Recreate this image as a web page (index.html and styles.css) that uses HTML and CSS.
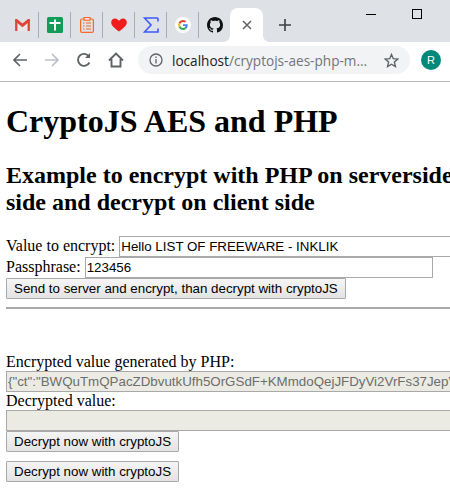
FILE: index.html
```html
<!DOCTYPE html>
<html lang="en">
<head>
  <meta charset="UTF-8" />
  <title>CryptoJS AES and PHP</title>
  <link rel="stylesheet" href="styles.css">
</head>
<body>
  <div class="tabstrip">
    <div class="tab-icon">
      <svg width="15" height="12" viewBox="0 0 16 13"><path d="M0 1.500 8 8l8-6.500V13H0z" fill="#e8e8e8"/><path d="M0 1h2.500v12H0z" fill="#d8473a"/><path d="M13.500 1H16v12h-2.500z" fill="#d8473a"/><path d="M0 0h2l6 5 6-5h2v2.500L8 9 0 2.500z" fill="#d8473a"/></svg>
    </div>
    <div class="tab-icon">
      <svg width="16" height="16" viewBox="0 0 16 16"><rect width="16" height="16" rx="1.500" fill="#0f9d58"/><path d="M7 2.500h2V5h4.500v2H9v6.500H7V7H2.500V5H7z" fill="#fff"/></svg>
    </div>
    <div class="tab-icon">
      <svg width="14" height="16" viewBox="0 0 14 16" fill="none" stroke="#f4682a" stroke-width="1.200"><rect x=".6" y="2" width="12.800" height="13.400" rx="1.500"/><rect x="4" y=".6" width="6" height="2.600" fill="#fff"/><path d="M3 6h1.500M6 6h5M3 9h1.500M6 9h5M3 12h1.500M6 12h5"/></svg>
    </div>
    <div class="tab-icon">
      <svg width="16" height="14" viewBox="0 0 16 14"><path d="M8 13.500C2 9 .2 6.800.2 4.200.2 2 2 .4 4 .4c1.700 0 3 .9 4 2.400C9 1.300 10.300.4 12 .4c2 0 3.800 1.600 3.800 3.800C15.800 6.800 14 9 8 13.500z" fill="#ee1c1c"/></svg>
    </div>
    <div class="tab-icon">
      <svg width="16" height="16" viewBox="0 0 16 16" fill="none" stroke="#3d5afe" stroke-width="1.600"><path d="M15 1H1.500L8 8l-6.500 7H15V11.500M15 1v3.500"/></svg>
    </div>
    <div class="tab-icon">
      <svg width="16" height="16" viewBox="0 0 16 16"><circle cx="8" cy="8" r="8" fill="#fff"/><path d="M12.700 8.200c0-.4 0-.7-.1-1H8v1.900h2.600c-.1.600-.5 1.200-1 1.500l1.600 1.200c.9-.9 1.500-2.100 1.500-3.600z" fill="#4285f4"/><path d="M8 13c1.300 0 2.400-.4 3.200-1.200l-1.600-1.200c-.4.300-1 .5-1.600.5-1.300 0-2.300-.8-2.700-2L3.700 10.300C4.500 11.900 6.100 13 8 13z" fill="#34a853"/><path d="M5.300 9.100c-.2-.7-.2-1.500 0-2.200L3.700 5.700c-.7 1.400-.7 3.200 0 4.600z" fill="#fbbc05"/><path d="M8 4.900c.7 0 1.300.2 1.800.7l1.400-1.400C10.300 3.400 9.200 3 8 3 6.100 3 4.500 4.100 3.700 5.700l1.600 1.200c.4-1.200 1.400-2 2.700-2z" fill="#ea4335"/></svg>
    </div>
    <div class="tab-icon">
      <svg width="16" height="16" viewBox="0 0 16 16"><path d="M8 0C3.580 0 0 3.580 0 8c0 3.540 2.290 6.530 5.470 7.590.4.070.55-.17.55-.38 0-.19-.01-.82-.01-1.490-2.010.37-2.530-.49-2.690-.94-.09-.23-.48-.94-.82-1.130-.28-.15-.68-.52-.01-.53.63-.01 1.080.58 1.230.82.720 1.210 1.870.87 2.330.66.070-.52.280-.87.510-1.070-1.780-.2-3.640-.89-3.640-3.950 0-.87.310-1.590.820-2.150-.08-.2-.36-1.020.08-2.120 0 0 .67-.21 2.200.82.640-.18 1.320-.27 2-.27s1.360.09 2 .27c1.530-1.040 2.200-.82 2.200-.82.440 1.100.16 1.920.08 2.120.51.560.82 1.270.82 2.150 0 3.070-1.870 3.750-3.650 3.950.29.250.54.730.54 1.480 0 1.070-.01 1.930-.01 2.200 0 .21.150.46.550.38A8.010 8.010 0 0 0 16 8c0-4.420-3.580-8-8-8z" fill="#111"/></svg>
    </div>
    <div class="tab-active">
      <svg width="10" height="10" viewBox="0 0 10 10" stroke="#5f6368" stroke-width="1.500"><path d="M1 1l8 8M9 1l-8 8"/></svg>
    </div>
    <svg class="new-tab" width="12" height="12" viewBox="0 0 12 12" stroke="#3c4043" stroke-width="1.600"><path d="M6 0v12M0 6h12"/></svg>
    <div class="window-controls">
      <div class="win-min"></div>
      <div class="win-max"></div>
    </div>
  </div>

  <div class="toolbar">
    <svg class="tool" width="16" height="16" viewBox="0 0 16 16" fill="none" stroke="#5f6368" stroke-width="1.700"><path d="M15 8H2M8 2 2 8l6 6"/></svg>
    <svg class="tool" width="16" height="16" viewBox="0 0 16 16" fill="none" stroke="#bdc1c6" stroke-width="1.700"><path d="M1 8h13M8 2l6 6-6 6"/></svg>
    <svg class="tool" width="16" height="16" viewBox="0 0 16 16" fill="none" stroke="#5f6368" stroke-width="1.900"><path d="M13.400 10.500A6 6 0 1 1 13 4.500"/><path d="M14 1v5H9" fill="#5f6368" stroke="none"/></svg>
    <svg class="tool" width="16" height="16" viewBox="0 0 16 16" fill="none" stroke="#5f6368" stroke-width="1.900"><path d="M1 8.500 8 1.500l7 7M3.500 7v7.500h9V7"/></svg>
    <div class="omnibox">
      <svg width="14" height="14" viewBox="0 0 14 14" fill="none" stroke="#5f6368" stroke-width="1.300"><circle cx="7" cy="7" r="6"/><path d="M7 6v4.500M7 3.500V5"/></svg>
      <span class="url"><span class="host">localhost</span>/cryptojs-aes-php-m...</span>
      <svg width="15" height="15" viewBox="0 0 15 15" fill="none" stroke="#5f6368" stroke-width="1.400"><path d="M7.500 1.500 9.300 5.700l4.500.4-3.400 3 1 4.400-3.900-2.300-3.900 2.300 1-4.400-3.400-3 4.500-.4z"/></svg>
    </div>
    <div class="avatar">R</div>
  </div>

  <div class="page">
    <h1>CryptoJS AES and PHP</h1>
    <h2>Example to encrypt with PHP on serverside<br>side and decrypt on client side</h2>
    <form>
      Value to encrypt: <input type="text" class="field field-value" value="Hello LIST OF FREEWARE - INKLIK"><br>
      Passphrase: <input type="text" class="field field-pass" value="123456"><br>
      <button type="button" class="btn">Send to server and encrypt, than decrypt with cryptoJS</button>
    </form>
    <hr>
    <br><br>
    Encrypted value generated by PHP:<br>
    <input type="text" class="field field-wide" disabled value='{"ct":"BWQuTmQPacZDbvutkUfh5OrGSdF+KMmdoQejJFDyVi2VrFs37JepVbJ5Qm"}'><br>
    Decrypted value:<br>
    <input type="text" class="field field-wide" disabled><br>
    <button type="button" class="btn">Decrypt now with cryptoJS</button>
    <div class="second-action">
      <button type="button" class="btn">Decrypt now with cryptoJS</button>
    </div>
  </div>
</body>
</html>
```

FILE: styles.css
```css
html, body { margin: 0; height: 490px; overflow: hidden; background: white; }
body { font-family: "Liberation Serif", serif; font-size: 16px; color: black; }

.tabstrip { height: 42px; background: #dee1e6; display: flex; padding-left: 7px; box-sizing: border-box; }
.tab-icon { width: 32px; height: 26px; margin-top: 12px; display: flex; align-items: center; justify-content: center; border-right: 1px solid #a9adb3; box-sizing: border-box; flex: none; }
.tab-icon:nth-child(7) { border-right: none; }
.tab-active { position: relative; width: 33px; height: 34px; margin: 8px 0 0 -1px; background: white; border-radius: 8px 8px 0 0; display: flex; align-items: center; justify-content: center; flex: none; }
.tab-active::before, .tab-active::after { content: ""; position: absolute; bottom: 0; width: 6px; height: 6px; }
.tab-active::before { left: -6px; background: radial-gradient(circle at 0 0, #dee1e6 5.500px, white 6px); }
.tab-active::after { right: -6px; background: radial-gradient(circle at 100% 0, #dee1e6 5.500px, white 6px); }
.new-tab { margin: 19px 0 0 16px; flex: none; }
.window-controls { display: flex; margin-left: 75px; }
.win-min { width: 10px; height: 1px; background: black; margin-top: 14px; }
.win-max { width: 8px; height: 8px; border: 1px solid black; margin: 9px 0 0 36px; }

.toolbar { height: 40px; background: white; border-bottom: 1px solid #b8b9bb; display: flex; align-items: center; padding: 0 0 3px 12px; box-sizing: border-box; }
.tool { margin-right: 16px; flex: none; }
.omnibox { width: 272px; height: 28px; margin-left: -2px; background: #f1f3f4; border-radius: 14px; display: flex; align-items: center; padding: 0 11px; box-sizing: border-box; flex: none; }
.url { font-family: "Open Sans", "Liberation Sans", sans-serif; font-size: 13.600px; color: #70757a; margin-left: 9px; flex: 1; white-space: nowrap; }
.host { color: #202124; }
.avatar { width: 20px; height: 20px; border-radius: 50%; background: #00897b; color: white; font: 11px "Liberation Sans", sans-serif; display: flex; align-items: center; justify-content: center; margin-left: 11px; flex: none; }

.page { padding: 0 6px; width: 800px; }
h1 { font-size: 32px; margin: 21px 0 22px; }
h2 { font-size: 24px; margin: 20px 0; }
.field { font-family: "Liberation Sans", sans-serif; font-size: 13.333px; height: 21px; box-sizing: border-box; border: 1px solid #a9a9a9; padding: 1px; margin: 0; color: black; background: white; }
.field:disabled { background: #ebebe4; color: #6d6d6d; }
.field-value { width: 500px; }
.field-pass { width: 348px; }
.field-wide { width: 600px; }
.btn { font-family: "Liberation Sans", sans-serif; font-size: 13.333px; height: 21px; padding: 0 7px; margin: 0; border: 1px solid #a9a9a9; border-radius: 1px; background: linear-gradient(#f5f5f5, #e3e3e3); color: black; }
hr { margin: 8px 0; border: 1px solid #a9a9a9; }
.second-action { margin-top: 9px; }
```
